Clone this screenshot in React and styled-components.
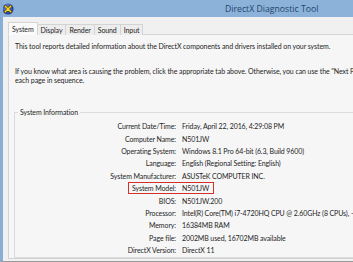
import styled, { createGlobalStyle } from "styled-components";

const GlobalStyle = createGlobalStyle`
  html, body {
    margin: 0;
    padding: 0;
    background: #f0f0f0;
  }
  body {
    font-family: Lato, "Open Sans", "Liberation Sans", sans-serif;
    color: #1e1e1e;
  }
`;

const Window = styled.div`
  width: 353px;
  height: 262px;
  box-sizing: border-box;
  overflow: hidden;
  display: flex;
  flex-direction: column;
  background: #f0f0f0;
  border-left: 3px solid #88aed6;
  border-bottom: 1px solid #9a9a9a;
`;

const TitleBar = styled.div`
  flex: 0 0 17px;
  margin-left: -3px;
  padding-left: 2px;
  display: flex;
  align-items: center;
  background: #8db2d9;
`;

const Title = styled.div`
  margin-left: 211px;
  font-family: "Open Sans", "Noto Sans", sans-serif;
  font-size: 8.7px;
  color: #22456c;
  white-space: nowrap;
`;

const Body = styled.div`
  flex: 1;
  display: flex;
  flex-direction: column;
  padding: 5px 0 2px 5px;
  min-height: 0;
`;

const TabStrip = styled.div`
  display: flex;
  align-items: flex-end;
  height: 13px;
  padding-left: 1px;
  position: relative;
  z-index: 1;
`;

const Tab = styled.div`
  height: ${({ active }) => (active ? "13px" : "11px")};
  box-sizing: border-box;
  padding: 0 3px;
  display: flex;
  align-items: center;
  font-size: 7px;
  letter-spacing: -0.1px;
  white-space: nowrap;
  border: 1px solid #d4d4d4;
  border-bottom: ${({ active }) => (active ? "1px solid #fafafa" : "none")};
  margin-left: -1px;
  background: ${({ active }) => (active ? "#fafafa" : "#ededed")};
`;

const Panel = styled.div`
  flex: 1;
  min-height: 0;
  margin-top: -1px;
  padding: 7px 0 0 6px;
  border: 1px solid #d4d4d4;
  border-right: none;
  background: #f6f6f6;
  white-space: nowrap;
  display: flex;
  flex-direction: column;
`;

const Paragraph = styled.p`
  margin: ${({ gap }) => gap || 0}px 0 0;
  font-size: 7px;
  letter-spacing: -0.08px;
  line-height: 9px;
`;

const Group = styled.fieldset`
  margin: 22px 0 0 -1px;
  padding: 3px 0 1px 0;
  border: 1px solid #dcdcdc;
  border-right: none;
  flex: 1;
  min-width: 0;
`;

const Legend = styled.legend`
  margin-left: 3px;
  padding: 0 2px;
  font-size: 7px;
  letter-spacing: -0.1px;
  line-height: 10px;
`;

const Row = styled.div`
  display: grid;
  grid-template-columns: 161px 1fr;
  align-items: center;
  height: 12.4px;
  font-size: 7px;
  letter-spacing: -0.1px;
`;

const Label = styled.div`
  text-align: right;
`;

const LabelText = styled.span`
  display: inline-block;
  line-height: 10px;
  padding-left: ${({ marked }) => (marked ? "3px" : "0")};
  border: ${({ marked }) => (marked ? "1.5px solid #d3302c" : "none")};
  border-right: none;
`;

const Value = styled.span`
  justify-self: start;
  display: inline-block;
  line-height: 10px;
  padding-left: 6px;
  padding-right: ${({ marked }) => (marked ? "4px" : "0")};
  border: ${({ marked }) => (marked ? "1.5px solid #d3302c" : "none")};
  border-left: none;
`;

const DxIcon = () => (
  <svg width="12" height="12" viewBox="0 0 12 12">
    <defs>
      <radialGradient id="dxg" cx="0.4" cy="0.35" r="0.7">
        <stop offset="0" stopColor="#6f8fe8" />
        <stop offset="1" stopColor="#14308e" />
      </radialGradient>
    </defs>
    <circle cx="6" cy="6" r="5.6" fill="url(#dxg)" />
    <path d="M3.2 3.2 L8.8 8.8 M8.8 3.2 L3.2 8.8" stroke="#3a2a00" strokeWidth="2.6" strokeLinecap="round" />
    <path d="M3.2 3.2 L8.8 8.8 M8.8 3.2 L3.2 8.8" stroke="#f4d21c" strokeWidth="1.6" strokeLinecap="round" />
  </svg>
);

const tabs = ["System", "Display", "Render", "Sound", "Input"];

const info = [
  ["Current Date/Time", "Friday, April 22, 2016, 4:29:08 PM"],
  ["Computer Name", "N501JW"],
  ["Operating System", "Windows 8.1 Pro 64-bit (6.3, Build 9600)"],
  ["Language", "English (Regional Setting: English)"],
  ["System Manufacturer", "ASUSTeK COMPUTER INC."],
  ["System Model", "N501JW", true],
  ["BIOS", "N501JW.200"],
  ["Processor", "Intel(R) Core(TM) i7-4720HQ CPU @ 2.60GHz (8 CPUs), ~2.6GHz"],
  ["Memory", "16384MB RAM"],
  ["Page file", "2002MB used, 16702MB available"],
  ["DirectX Version", "DirectX 11"],
];

export default function App() {
  return (
    <>
      <GlobalStyle />
      <Window>
        <TitleBar>
          <DxIcon />
          <Title>DirectX Diagnostic Tool</Title>
        </TitleBar>
        <Body>
          <TabStrip>
            {tabs.map((t, k) => (
              <Tab key={t} active={k === 0}>
                {t}
              </Tab>
            ))}
          </TabStrip>
          <Panel>
            <Paragraph>
              This tool reports detailed information about the DirectX components and drivers installed on your system.
            </Paragraph>
            <Paragraph gap={16}>
              If you know what area is causing the problem, click the appropriate tab above.  Otherwise, you can use the "Next Page" button below to visit
              <br />
              each page in sequence.
            </Paragraph>
            <Group>
              <Legend>System Information</Legend>
              {info.map(([label, value, marked]) => (
                <Row key={label}>
                  <Label>
                    <LabelText marked={marked}>{label}:</LabelText>
                  </Label>
                  <Value marked={marked}>{value}</Value>
                </Row>
              ))}
            </Group>
          </Panel>
        </Body>
      </Window>
    </>
  );
}
